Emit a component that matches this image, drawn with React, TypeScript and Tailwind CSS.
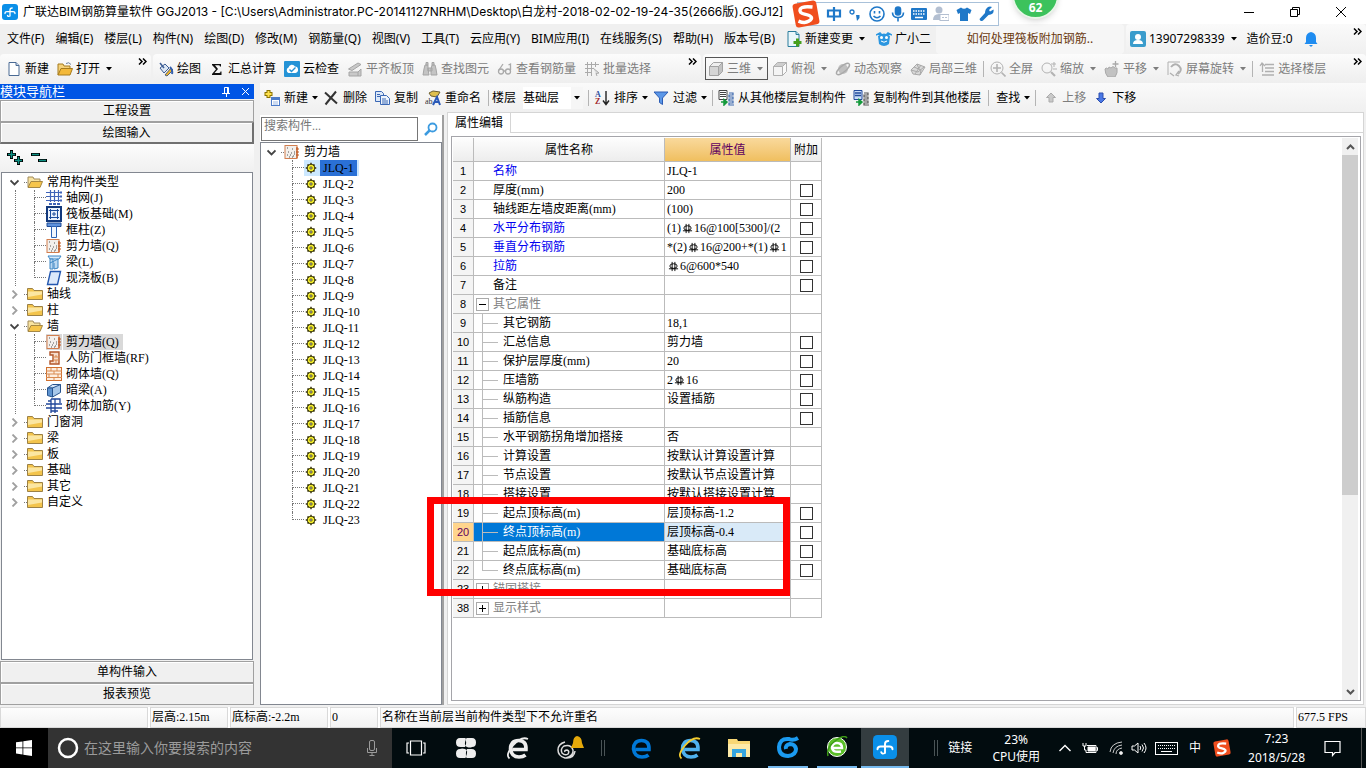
import type { ReactNode } from "react"

const Icons: Record<string, ReactNode> = {
  app: <><rect x="0" y="0" width="16" height="16" rx="3" fill="#0a8fe8" /><path d="M3 9.500q0-1.800 2-1.800h6q2 0 2 1.800M8 12V6q0-2 2.200-2M8 12q-2 1-2.500-.5" fill="none" stroke="#fff" strokeWidth="1.300" strokeLinecap="round" /></>,
  file: <><path d="M3 1.500h7l3 3v10H3z" fill="#fff" stroke="#4a6a94" /><path d="M10 1.500v3h3" fill="#c9d8ea" stroke="#4a6a94" /></>,
  open: <><path d="M1 14V3h5l1 2h6v3" fill="#f5d27a" stroke="#a67b1d" /><path d="M1 14l3-6.500h11.500L13 14z" fill="#f3b93a" stroke="#a67b1d" /><path d="M9 2.500q3-2 5 1" fill="none" stroke="#6a7f9c" /></>,
  folderOpen: <><path d="M1 13V3h5l1 2h6v2" fill="#f8e3a0" stroke="#a08a5a" /><path d="M1 13.500l3-6h11.500l-2.500 6z" fill="#f6c54b" stroke="#a58845" /></>,
  folder: <><path d="M.5 13.500v-11h5l1.500 2h8.500v9z" fill="#f3c44c" stroke="#9c8145" /><path d="M1 5.500h14v3L1 11z" fill="#fbe6a2" /></>,
  paint: <><path d="M2 7l5-4 4 4-5 5z" fill="#dde7f3" stroke="#3c5c94" /><path d="M2 2l4 5" stroke="#3c5c94" strokeWidth="1.500" /><path d="M7 14l6-7 2 2-6 6z" fill="#f0b429" stroke="#52627a" /><path d="M12 6q3 3 2 7" fill="none" stroke="#345fae" strokeWidth="2" /></>,
  sigma: <path d="M3 3h9v2.500h-1q0-1.200-1.500-1.200H6L9 8l-3.500 4H10q1.500 0 1.500-1.500h1V14H3v-1l4-4.800L3 4z" fill="#111" />,
  cloud: <><rect width="16" height="16" rx="1" fill="#2593d6" /><path d="M4.500 12a3 3 0 0 1 0-5.500 3.500 3.500 0 0 1 6.500-1 3.300 3.300 0 0 1 .5 6.500z" fill="#fff" /><path d="M5.500 8.500l2 2 4-4" fill="none" stroke="#2593d6" strokeWidth="1.400" /></>,
  slab: <g fill="#c9c9c9" stroke="#a5a5a5"><path d="M1.500 8L11 2l3 1.500L5 9.500z" /><path d="M2 11h9v4H2zM11 11l3-3v7h-3" /></g>,
  bino: <g fill="#c4c4c4" stroke="#a5a5a5"><path d="M3 4h3v4l1 6H1l1-6zM10 4h3l1 4 1 6H9V8zM6 7h4v3H6z" /><path d="M4 1.500h2V4H4zM10 1.500h2V4h-2z" /></g>,
  glasses: <g fill="none" stroke="#a9a9a9" strokeWidth="1.300"><circle cx="4" cy="10.500" r="2.500" /><circle cx="11" cy="10.500" r="2.500" /><path d="M6.500 10h2M2 9l4-6M13.500 9V3l-2 1" /></g>,
  batch: <g fill="none" stroke="#aaa"><path d="M1 3.500h14M1 7.500h9M1 11.500h7M3.500 1v14M7.500 1v14M11.500 1v5" /><path d="M9 7l6 5-3 .5 1 2.500" fill="#ddd" /></g>,
  cube: <g stroke="#a3a3a3"><path d="M1.500 5.500h9v9h-9z" fill="#d5d5d5" /><path d="M1.500 5.500l4-4h9l-4 4z" fill="#efefef" /><path d="M10.500 5.500l4-4v9l-4 4z" fill="#c3c3c3" /></g>,
  cubeTop: <g stroke="#b0b0b0"><path d="M1.500 5.500h9v9h-9z" fill="#f4f4f4" /><path d="M1.500 5.500l4-4h9l-4 4z" fill="#cecece" /><path d="M10.500 5.500l4-4v9l-4 4z" fill="#fafafa" /></g>,
  orbit: <g><circle cx="8" cy="8" r="5" fill="#c0c0c0" /><ellipse cx="8" cy="8" rx="8" ry="3" transform="rotate(-40 8 8)" fill="none" stroke="#a9a9a9" strokeWidth="1.400" /></g>,
  local3d: <g fill="#dadada" stroke="#a9a9a9"><path d="M1 9l6-6 8 3-5 8-7-1z" /><path d="M4 6l7 3-1 5M7 3l2 5M11 4l-6 9M1 9l7 2 6-5" fill="none" /></g>,
  full: <g fill="none" stroke="#b3b3b3"><circle cx="7" cy="7" r="6" /><path d="M7 3v8M3 7h8M11.500 11.500l4 4" strokeWidth="1.600" /></g>,
  zoom: <g fill="none" stroke="#b3b3b3"><circle cx="6" cy="7" r="5" /><path d="M10 11l4 4" strokeWidth="2.200" /><path d="M10 3h5M13 1v5M12 8h4" /></g>,
  pan: <g><path d="M1 8q1-2 3 0l1-2 2 1 2-1.500 2 1.500 2 0q1 5-2 9H4q-3-3-3-8z" fill="#c2c2c2" stroke="#a9a9a9" /><path d="M11.500 0v6M8.500 3h6" stroke="#a9a9a9" strokeWidth="1.300" /></g>,
  rotate: <g fill="none" stroke="#b0b0b0"><path d="M1 14V1h12" /><path d="M4 6q4-5 8-1t-1 8" strokeWidth="2" /><path d="M12 15l-3-1 3-4M3 12l4 3" strokeWidth="1.300" /></g>,
  floors: <g fill="none" stroke="#b0b0b0" strokeWidth="1.300"><path d="M6 3.500h9M6 7h9M6 10.500h9M3 14h12M1 5l2-3 3 3M3.500 2v9" /></g>,
  add: <><path d="M4.500 0v8M.5 4h8" stroke="#8b7300" strokeWidth="4" /><path d="M4.500 1v6M1.500 4h6" stroke="#ffe14d" strokeWidth="2" /><rect x="7.500" y="7.500" width="8" height="8" fill="#fff" stroke="#4d7cc9" /><path d="M7.500 9h8" stroke="#4d7cc9" strokeWidth="2" /><path d="M9 12h5M9 14h5" stroke="#9cb8e4" /></>,
  del: <path d="M2 2.500l12 11M13 1.500L2.500 14.500" stroke="#333" strokeWidth="2" fill="none" />,
  copy: <g stroke="#3b68b5"><path d="M1.500 1.500h6l2 2v8h-8z" fill="#dce8f8" /><path d="M6.500 5.500h6l3 3v6h-9z" fill="#eef4fc" /><path d="M3 4.500h3M3 6.500h3M8 9h4M8 11h6M8 13h6" /></g>,
  rename: <><path d="M4 3l4-2 7 1-3 5-6-1z" fill="#dfc04e" stroke="#6c6033" /><text x="0" y="14" fontSize="8" fill="#333">ab</text><path d="M8 15l4-8 3 8M9.500 12h4.500" fill="none" stroke="#2a59b8" strokeWidth="2" /></>,
  sort: <><text x="1" y="7" fontSize="8" fontWeight="700" fill="#2d4d9f">A</text><text x="1" y="14" fontSize="8" fontWeight="700" fill="#a1292d">Z</text><path d="M12 1v12M9 10.500l3 4 3-4" fill="none" stroke="#222" strokeWidth="1.400" /></>,
  filter: <path d="M1 2h14l-5.500 6v6.500l-3-2V8z" fill="#5b97e8" stroke="#2c5cb4" />,
  copyFrom: <><path d="M1 .5h8v9H1z" fill="#fff" stroke="#444" /><path d="M2 2.500h6M2 4.500h6M2 6.500h6" stroke="#444" /><path d="M3 12h5M6 9.500l3 2.500-3 3z" stroke="#159a3c" fill="#159a3c" strokeWidth="1.500" /><path d="M11 3h4v2h-4v2h4v2h-4v2h4v2h-4v2h5" fill="none" stroke="#3c68ad" strokeWidth="1.200" /></>,
  copyTo: <><path d="M1 .5h8v9H1z" fill="#c9dcf7" stroke="#234b9c" /><path d="M2 3h6M2 5.500h6" stroke="#234b9c" strokeWidth="1.500" /><path d="M3 12h5M6 9.500l3 2.500-3 3z" stroke="#159a3c" fill="#159a3c" strokeWidth="1.500" /><path d="M11 3h4v2h-4v2h4v2h-4v2h4v2h-4v2h5" fill="none" stroke="#555" strokeWidth="1.200" /></>,
  up: <path d="M8 3l4.500 4.500H10V12H6V7.500H3.500z" fill="#c9c9c9" stroke="#ababab" />,
  down: <path d="M8 13L3.500 8.500H6V3h4v5.500h2.500z" fill="#4a78e6" stroke="#2c4fae" />,
  change: <><path d="M2 .5h8l3 3v12H2z" fill="#e9f6fb" stroke="#2a7c9c" /><path d="M10 .5v3h3" fill="#b5dfee" stroke="#2a7c9c" /><path d="M11.500 7.500v8M7.500 11.500h8" stroke="#46a01d" strokeWidth="3" /></>,
  owl: <><path d="M2 5q6-5 12 0l-1 8q-5 4-10 0z" fill="#2b96e0" /><path d="M0 4l4-2 2 2M16 4l-4-2-2 2" fill="#2b96e0" stroke="#2b96e0" strokeWidth="1.500" /><circle cx="5.500" cy="6.500" r="1.500" fill="#fff" /><circle cx="10.500" cy="6.500" r="1.500" fill="#fff" /><path d="M5 10q3 2.500 6 0" stroke="#fff" fill="none" /></>,
  user: <><rect width="16" height="16" rx="2" fill="#3a9ccc" /><circle cx="8" cy="6" r="3" fill="#fff" /><path d="M3 13q0-4 5-4t5 4z" fill="#fff" /></>,
  bell: <path d="M8 1q5 1 5 6v4l1.500 2h-13L3 11V7q0-5 5-6zM6 14h4l-2 2z" fill="#1f8cf0" />,
  axis: <g fill="none" stroke="#3f63b8" strokeWidth="1.200"><path d="M4.500 0v12M8.500 0v12M12.500 0v12M0 2.500h14M0 6.500h14M0 10.500h14" /><path d="M3 14h3M7 14h3M11 14h3M15 1.500v2M15 5.500v2M15 9.500v2" strokeWidth="2" /></g>,
  raft: <><rect x="1" y="1" width="14" height="14" fill="#eaf1fb" stroke="#12387c" strokeWidth="2" /><path d="M3 4.500h10M3 11.500h10M4.500 3v10M11.500 3v10M7 7h2v2H7z" stroke="#1c4d9c" fill="none" /></>,
  column: <><path d="M1 1h14v3.500H1z" fill="#5f92dc" stroke="#1e4a94" /><path d="M5.500 4.500h5v11h-5z" fill="#f1f6fd" stroke="#2c62b4" /></>,
  wall: <><rect x="1" y="1.500" width="12" height="13" fill="#f3efeb" stroke="#d27e4f" /><path d="M3 4h1M4 8h1M8 5h1M10 8h1M7 9h1M3 11h1M5 13h1M9 12h1M10 10h1M6 11h1M8 13h1" stroke="#555" /><path d="M13 3v11M12 5h3M12 8h3M12 11h3" stroke="#c0561d" strokeWidth="1.200" /></>,
  beam: <><path d="M2 2h13l-2 3H4z" fill="#d5e9fa" stroke="#3c86c4" /><path d="M4 5h3v10H4zM4 9l8-4v9l-4 1V9" fill="#bcd9f2" stroke="#3c86c4" /></>,
  plate: <path d="M4.500 1.500h10l-3 13h-10z" fill="#dce9fb" stroke="#2458b0" strokeWidth="1.400" />,
  door: <><path d="M4 2h9v12H4v-3h3V5H4z" fill="#f6dccb" stroke="#b2562a" strokeWidth="1.400" /><path d="M7 7h6M7 10h6M10 5v2M10 10v3" stroke="#d98a50" /></>,
  brick: <><rect x=".5" y="1.500" width="15" height="13" fill="#fdeee0" stroke="#d0702e" /><path d="M0 5h16M0 8h16M0 11.500h16M5 2v3M11 2v3M8 5v3M3 8v3M12 8v3M8 11.500v3" stroke="#d98a50" /></>,
  hidden: <g stroke="#27548f"><path d="M1.500 6l5-3.500h8l-4 3.500z" fill="#d5e5f7" /><path d="M1.500 6h5v9l-5-1.500z" fill="#5e93cf" /><path d="M6.500 6l8-3.500v8l-8 4.500z" fill="#a8c8ea" /></g>,
  rebar: <path d="M0 6h16M0 10h16M5 1h9v4M5 1v14M9 1v14M2 3h3v10h7" fill="none" stroke="#20479a" strokeWidth="1.300" />,
  gear: <><circle cx="8" cy="8" r="4.500" fill="#f4ee2a" stroke="#3a3710" /><path d="M8 2v2.500M8 11.500V14M2 8h2.500M11.500 8H14M4 4l1.500 1.500M10.500 10.500L12 12M12 4l-1.500 1.500M5.500 10.500L4 12" stroke="#3a3710" strokeWidth="1.600" /><circle cx="8" cy="8" r="1.300" fill="#fff" stroke="#3a3710" /></>,
}

function Ico({ name, className = "size-4" }: { name: string; className?: string }) {
  return (
    <svg viewBox="0 0 16 16" className={`shrink-0 ${className}`} aria-hidden="true">
      {Icons[name]}
    </svg>
  )
}

function Caret() {
  return (
    <svg viewBox="0 0 6 4" className="h-1 w-1.5 shrink-0" aria-hidden="true">
      <path d="M0 0h6L3 3.500z" fill="currentColor" />
    </svg>
  )
}

function More() {
  return (
    <button className="ml-auto flex h-full items-start pt-1 pr-1" aria-label="more">
      <svg viewBox="0 0 9 7" className="h-[7px] w-[9px]" fill="none" stroke="#000" strokeWidth="1.500">
        <path d="M1 .5l3 3-3 3M5 .5l3 3-3 3" />
      </svg>
    </button>
  )
}

function Sep({ className = "" }: { className?: string }) {
  return <span className={`h-4 w-px shrink-0 bg-[#b4b4b4] ${className}`} />
}

type ToolProps = { icon?: string; label: string; caret?: boolean; dim?: boolean; wide?: boolean; className?: string }

function Tool({ icon, label, caret, dim, wide, className = "" }: ToolProps) {
  return (
    <button className={`flex shrink-0 items-center whitespace-nowrap ${wide ? "gap-1" : "gap-[3px]"} ${wide && caret ? "-mr-0.5" : ""} ${dim ? "text-[#7d7d7d]" : "text-black"} ${className}`}>
      {icon && <Ico name={icon} />}
      <span>{label}</span>
      {caret && <span className={wide ? "" : "pl-[3px]"}><Caret /></span>}
    </button>
  )
}

const menus = [
  "文件(F)", "编辑(E)", "楼层(L)", "构件(N)", "绘图(D)", "修改(M)", "钢筋量(Q)", "视图(V)",
  "工具(T)", "云应用(Y)", "BIM应用(I)", "在线服务(S)", "帮助(H)", "版本号(B)",
]

function TitleBar() {
  return (
    <header className="flex h-6 shrink-0 items-center bg-white pl-0.5">
      <Ico name="app" />
      <h1 className="ml-[5px] grow text-xs whitespace-nowrap [font-family:Inter,'Noto_Sans_CJK_SC',sans-serif]">
        广联达BIM钢筋算量软件 GGJ2013 - [C:\Users\Administrator.PC-20141127NRHM\Desktop\白龙村-2018-02-02-19-24-35(2666版).GGJ12]
      </h1>
      <div className="flex gap-9 pr-5">
        <button aria-label="minimize"><svg viewBox="0 0 10 10" className="size-2.5"><path d="M0 5.500h10" stroke="#000" /></svg></button>
        <button aria-label="restore"><svg viewBox="0 0 10 10" className="size-2.5" fill="none" stroke="#000"><path d="M.5 2.500h7v7h-7zM2.500 2V.5h7v7H8" /></svg></button>
        <button aria-label="close"><svg viewBox="0 0 10 10" className="size-2.5" stroke="#000"><path d="M0 0l10 10M10 0L0 10" /></svg></button>
      </div>
    </header>
  )
}

function MenuBar() {
  return (
    <div className="flex h-[30px] shrink-0 items-center bg-[#f0f0f0]">
      <nav className="flex items-center gap-[11px] pl-[7px]">
        {menus.map((m) => <button key={m} className="whitespace-nowrap">{m}</button>)}
        <Tool icon="change" label="新建变更" caret />
        <Tool icon="owl" label="广小二" />
      </nav>
      <div className="ml-auto flex h-full w-[188px] items-center justify-center rounded-sm bg-[#f6f6f6]">
        <a href="#help" className="text-[#6b3a10]">如何处理筏板附加钢筋..</a>
      </div>
      <div className="ml-0.5 flex h-full w-[240px] items-center gap-2.5 rounded-sm bg-linear-to-b from-[#fafafa] to-[#f0f0f0] pl-1">
        <Tool icon="user" label="13907298339" caret />
        <span>造价豆:0</span>
        <Ico name="bell" />
        <More />
      </div>
    </div>
  )
}

function MainToolbar() {
  const band = "flex h-full items-center gap-2 rounded-sm bg-linear-to-b from-[#fcfcfc] to-[#eeeeee]"
  return (
    <div className="flex h-[29px] shrink-0 gap-0.5 bg-[#f0f0f0]">
      <div className={`${band} w-[151px] shrink-0 pl-1.5`}>
        <Tool icon="file" label="新建" />
        <Tool icon="open" label="打开" caret />
        <More />
      </div>
      <div className={`${band} w-[548px] shrink-0 pl-[5px]`}>
        <Tool icon="paint" label="绘图" />
        <Tool icon="sigma" label="汇总计算" />
        <Tool icon="cloud" label="云检查" />
        <Tool icon="slab" label="平齐板顶" dim />
        <Tool icon="bino" label="查找图元" dim />
        <Tool icon="glasses" label="查看钢筋量" dim />
        <Tool icon="batch" label="批量选择" dim />
        <More />
      </div>
      <div className={`${band} min-w-0 grow pl-0.5`}>
        <Tool icon="cube" label="三维" caret dim className="-mr-1 h-[23px] border border-[#555] px-0.5 pr-1" />
        <Tool icon="cubeTop" label="俯视" caret dim />
        <Tool icon="orbit" label="动态观察" dim />
        <Tool icon="local3d" label="局部三维" dim />
        <Sep className="-mx-0.5" />
        <Tool icon="full" label="全屏" dim />
        <Tool icon="zoom" label="缩放" caret dim />
        <Tool icon="pan" label="平移" caret dim />
        <Tool icon="rotate" label="屏幕旋转" caret dim />
        <Sep className="-mx-0.5" />
        <Tool icon="floors" label="选择楼层" dim />
        <More />
      </div>
    </div>
  )
}

function ComponentToolbar() {
  return (
    <div className="flex h-[29px] shrink-0 items-center gap-[7px] bg-linear-to-b from-[#fafafa] to-[#f0f0f0] pl-1">
      <Tool icon="add" label="新建" caret wide />
      <Tool icon="del" label="删除" wide />
      <Tool icon="copy" label="复制" wide />
      <Tool icon="rename" label="重命名" wide />
      <Sep />
      <label htmlFor="floor" className="-ml-1 shrink-0">楼层</label>
      <div className="relative flex h-[22px] w-[60px] shrink-0 items-center bg-white">
        <select id="floor" className="w-full appearance-none bg-transparent outline-none">
          <option>基础层</option>
        </select>
        <span className="pointer-events-none absolute right-0 flex h-full w-3 items-center justify-center bg-[#f6f6f6]"><Caret /></span>
      </div>
      <Sep className="-mx-0.5" />
      <Tool icon="sort" label="排序" caret wide />
      <Tool icon="filter" label="过滤" caret wide />
      <Sep className="-mr-0.5" />
      <Tool icon="copyFrom" label="从其他楼层复制构件" wide />
      <Tool icon="copyTo" label="复制构件到其他楼层" wide />
      <Sep />
      <Tool label="查找" caret wide />
      <Sep />
      <Tool icon="up" label="上移" dim />
      <Tool icon="down" label="下移" />
    </div>
  )
}

type Node = { label: string; icon: string; active?: boolean }
const tree: { label: string; children?: Node[] }[] = [
  {
    label: "常用构件类型",
    children: [
      { label: "轴网(J)", icon: "axis" },
      { label: "筏板基础(M)", icon: "raft" },
      { label: "框柱(Z)", icon: "column" },
      { label: "剪力墙(Q)", icon: "wall" },
      { label: "梁(L)", icon: "beam" },
      { label: "现浇板(B)", icon: "plate" },
    ],
  },
  { label: "轴线" },
  { label: "柱" },
  {
    label: "墙",
    children: [
      { label: "剪力墙(Q)", icon: "wall", active: true },
      { label: "人防门框墙(RF)", icon: "door" },
      { label: "砌体墙(Q)", icon: "brick" },
      { label: "暗梁(A)", icon: "hidden" },
      { label: "砌体加筋(Y)", icon: "rebar" },
    ],
  },
  { label: "门窗洞" }, { label: "梁" }, { label: "板" }, { label: "基础" }, { label: "其它" }, { label: "自定义" },
]

function Chevron({ open }: { open: boolean }) {
  return (
    <button className="flex w-5 justify-center" aria-label={open ? "collapse" : "expand"}>
      <svg viewBox="0 0 9 9" className="size-[9px]" fill="none" strokeWidth="1.800" stroke={open ? "#444" : "#a0a0a0"}>
        <path d={open ? "M.5 2.500l4 4 4-4" : "M2.500 .5l4 4-4 4"} />
      </svg>
    </button>
  )
}

function Branch({ last }: { last: boolean }) {
  return (
    <span className="h-4 w-3 shrink-0">
      <span className="block h-2 w-full border-b border-l border-dotted border-[#777]" />
      {!last && <span className="block h-2 w-full border-l border-dotted border-[#777]" />}
    </span>
  )
}

const navButton = "h-[22px] w-full shrink-0 border border-[#a0a0a0] bg-[#f0f0f0] text-center leading-5 shadow-[inset_1px_1px_0_#fff]"

function Navigator() {
  return (
    <aside className="flex w-[254px] shrink-0 flex-col pt-px pb-0.5">
      <div className="flex h-[15px] shrink-0 items-center bg-[#0055e5] text-white">
        <h2 className="grow text-[13px] leading-[15px]">模块导航栏</h2>
        <button aria-label="pin" className="mr-2.5"><svg viewBox="0 0 9 10" className="h-2.5 w-[9px]" fill="none" stroke="#fff"><path d="M2.500 6V.5h4V6M5.500 1v5M0 6.500h8M4.500 6.500V10" /></svg></button>
        <button aria-label="close panel" className="mr-1"><svg viewBox="0 0 9 9" className="size-[9px]" stroke="#fff"><path d="M1 1l7 7M8 1L1 8" /></svg></button>
      </div>
      <button className={`${navButton} mt-px`}>工程设置</button>
      <button className={`${navButton} border-r-2 border-b-2 border-r-[#707070] border-b-[#707070]`}>绘图输入</button>
      <div className="flex h-7 shrink-0 items-center gap-2 bg-linear-to-b from-[#fcfcfc] to-[#f0f0f0] pl-[7px]">
        <button aria-label="expand all">
          <svg viewBox="0 0 16 16" className="size-4"><path d="M4.500 0v9M0 4.500h9M11.500 6v9M7 10.500h9" stroke="#000" strokeWidth="3" /><path d="M4.500 1v7M1 4.500h7M11.500 7v7M8 10.500h7" stroke="#0d8f82" strokeWidth="1.500" /></svg>
        </button>
        <button aria-label="collapse all">
          <svg viewBox="0 0 16 16" className="size-4"><path d="M0 4.500h9M7 10.500h9" stroke="#000" strokeWidth="3" /><path d="M1 4.500h7M8 10.500h7" stroke="#0d8f82" strokeWidth="1.500" /></svg>
        </button>
      </div>
      <ul className="mx-px min-h-0 grow overflow-hidden border border-[#828790] bg-white pt-px pl-0.5 leading-4">
        {tree.map((g) => (
          <li key={g.label}>
            <div className="flex h-4 items-center">
              <Chevron open={!!g.children} />
              <span className="w-[3px] border-b border-dotted border-[#777]" />
              <Ico name={g.children ? "folderOpen" : "folder"} />
              <span className="pl-1">{g.label}</span>
            </div>
            {g.children && (
              <ul className="ml-[11px] border-l border-dotted border-[#777] pl-[18px]">
                {g.children.map((c, i) => (
                  <li key={c.label} className="flex h-4 items-center">
                    <Branch last={i === g.children!.length - 1} />
                    <Ico name={c.icon} className={c.active ? "size-4 bg-[#d9d9d9]" : "size-4"} />
                    <span className={c.active ? "ml-px bg-[#d9d9d9] pr-1 pl-[3px]" : "pl-1"}>{c.label}</span>
                  </li>
                ))}
              </ul>
            )}
          </li>
        ))}
      </ul>
      <button className={`${navButton} mt-px`}>单构件输入</button>
      <button className={navButton}>报表预览</button>
    </aside>
  )
}

const walls = Array.from({ length: 23 }, (_, i) => `JLQ-${i + 1}`)

function ComponentList() {
  return (
    <section className="mt-[3px] mb-0.5 flex w-[184px] shrink-0 flex-col border-r-2 border-[#a0a0a0] bg-white">
      <div className="flex h-[27px] shrink-0 items-center pl-px">
        <input aria-label="搜索构件" placeholder="搜索构件..." className="h-6 w-[157px] border border-[#767676] px-0.5 pb-1 text-xs outline-none placeholder:text-[#777]" />
        <button aria-label="search" className="ml-1.5">
          <svg viewBox="0 0 14 14" className="size-3.5" fill="none" stroke="#3c9be0"><circle cx="8.500" cy="5.500" r="4" strokeWidth="1.800" /><path d="M5.500 8.500L1 13" strokeWidth="2.500" /></svg>
        </button>
      </div>
      <ul className="min-h-0 grow overflow-hidden border border-[#828790] pt-px leading-4">
        <li>
          <div className="flex h-4 items-center">
            <Chevron open />
            <span className="w-[3px] border-b border-dotted border-[#777]" />
            <Ico name="wall" />
            <span className="pl-1">剪力墙</span>
          </div>
          <ul className="ml-[31px]">
            {walls.map((w, i) => (
              <li key={w} className="flex h-4 items-center">
                <Branch last={i === walls.length - 1} />
                <span className={i === 0 ? "flex bg-[#cce8ff] pr-0.5" : "flex pr-0.5"}>
                  <Ico name="gear" className="mr-0.5 h-4 w-3.5" />
                  <span className={i === 0 ? "bg-[#2a70d6] px-[3px]" : "px-[3px]"}>{w}</span>
                </span>
              </li>
            ))}
          </ul>
        </li>
      </ul>
    </section>
  )
}

type Row = { n: number; name: string; value?: string; check?: boolean; kind?: "group" | "closed" | "child" | "last"; blue?: boolean; selected?: boolean }

// "#" in a value stands for the steel grade mark
const rows: Row[] = [
  { n: 1, name: "名称", value: "JLQ-1", blue: true },
  { n: 2, name: "厚度(mm)", value: "200", check: true },
  { n: 3, name: "轴线距左墙皮距离(mm)", value: "(100)", check: true },
  { n: 4, name: "水平分布钢筋", value: "(1)#16@100[5300]/(2", check: true, blue: true },
  { n: 5, name: "垂直分布钢筋", value: "*(2)#16@200+*(1)#1", check: true, blue: true },
  { n: 6, name: "拉筋", value: "#6@600*540", check: true, blue: true },
  { n: 7, name: "备注", check: true },
  { n: 8, name: "其它属性", kind: "group" },
  { n: 9, name: "其它钢筋", value: "18,1", kind: "child" },
  { n: 10, name: "汇总信息", value: "剪力墙", check: true, kind: "child" },
  { n: 11, name: "保护层厚度(mm)", value: "20", check: true, kind: "child" },
  { n: 12, name: "压墙筋", value: "2#16", check: true, kind: "child" },
  { n: 13, name: "纵筋构造", value: "设置插筋", check: true, kind: "child" },
  { n: 14, name: "插筋信息", check: true, kind: "child" },
  { n: 15, name: "水平钢筋拐角增加搭接", value: "否", kind: "child" },
  { n: 16, name: "计算设置", value: "按默认计算设置计算", kind: "child" },
  { n: 17, name: "节点设置", value: "按默认节点设置计算", kind: "child" },
  { n: 18, name: "搭接设置", value: "按默认搭接设置计算", kind: "child" },
  { n: 19, name: "起点顶标高(m)", value: "层顶标高-1.2", check: true, kind: "child" },
  { n: 20, name: "终点顶标高(m)", value: "层顶标高-0.4", check: true, kind: "child", selected: true },
  { n: 21, name: "起点底标高(m)", value: "基础底标高", check: true, kind: "child" },
  { n: 22, name: "终点底标高(m)", value: "基础底标高", check: true, kind: "last" },
  { n: 23, name: "锚固搭接", kind: "closed" },
  { n: 38, name: "显示样式", kind: "closed" },
]

function Grade() {
  return (
    <svg viewBox="0 0 12 12" className="mx-px inline size-[11px] align-[-2px]" fill="none" stroke="currentColor">
      <ellipse cx="6" cy="5.500" rx="4" ry="2.500" />
      <path d="M4.500 1v10M7.500 1v10M1 8.500h10" />
    </svg>
  )
}

function Value({ text }: { text: string }) {
  return <>{text.split("#").map((part, i) => <span key={i}>{i > 0 && <Grade />}{part}</span>)}</>
}

function Guide({ kind }: { kind?: Row["kind"] }) {
  if (kind === "child")
    return <span className="mr-[5px] ml-2 flex h-[19px] w-4 shrink-0 items-center border-l border-[#bbb]"><span className="h-px w-full bg-[#bbb]" /></span>
  if (kind === "last")
    return <span className="mr-[5px] ml-2 h-2.5 w-4 shrink-0 self-start border-b border-l border-[#bbb]" />
  if (kind)
    return (
      <button className="mr-1 ml-0.5 flex size-[13px] shrink-0 items-center justify-center border border-[#aaa] bg-white" aria-label={kind === "group" ? "collapse" : "expand"}>
        <svg viewBox="0 0 7 7" className="size-[7px]" stroke="#000"><path d={kind === "group" ? "M0 3.500h7" : "M0 3.500h7M3.500 0v7"} /></svg>
      </button>
    )
  return <span className="w-[19px] shrink-0" />
}

function PropertyTable() {
  const cell = "h-[19px] border-r border-b border-[#bbb] p-0"
  const head = "h-6 border-r border-b border-[#bbb] bg-linear-to-b from-[#fdfdfd] to-[#ededed] p-0 font-normal"
  return (
    <table className="w-[369px] table-fixed border-separate border-spacing-0 leading-[18px]">
      <colgroup>
        <col className="w-[21px]" /><col className="w-[191px]" /><col className="w-[126px]" /><col className="w-[31px]" />
      </colgroup>
      <thead>
        <tr>
          <th className={head} aria-label="序号" />
          <th className={head}>属性名称</th>
          <th className="h-6 border-r border-b border-[#bbb] bg-linear-to-b from-[#f9d99c] to-[#f0bf5e] p-0 font-normal text-[#600060]">属性值</th>
          <th className={`${head} whitespace-nowrap`}>附加</th>
        </tr>
      </thead>
      <tbody>
        {rows.map((r) => (
          <tr key={r.n}>
            <td className={`${cell} text-center text-[11px] [font-family:'Liberation_Sans',sans-serif] ${r.selected ? "bg-[#ffd58d] text-[#600060]" : "bg-[#f4f4f4]"}`}>{r.n}</td>
            <td className={`${cell} ${r.selected ? "bg-[#0078d7] text-white" : r.blue ? "text-[#0000f0]" : r.kind === "group" || r.kind === "closed" ? "text-[#808080]" : ""}`}>
              <div className="flex h-[18px] items-center whitespace-nowrap"><Guide kind={r.kind} /><span>{r.name}</span></div>
            </td>
            <td className={`${cell} ${r.selected ? "bg-[#d9eaf8]" : ""}`}>
              <div className="h-[18px] overflow-hidden pl-0.5 whitespace-nowrap">{r.value && <Value text={r.value} />}</div>
            </td>
            <td className={cell}>
              <div className="flex h-[18px] items-center justify-center">
                {r.check && <input type="checkbox" aria-label={`附加 ${r.name}`} className="size-[13px] appearance-none border border-[#333] bg-white" />}
              </div>
            </td>
          </tr>
        ))}
      </tbody>
    </table>
  )
}

function PropertyEditor() {
  return (
    <section className="mr-0.5 mb-0.5 ml-[3px] flex min-w-0 grow flex-col border-r border-b border-l border-[#d5d5d5] bg-white">
      <div className="flex h-[21px] shrink-0">
        <button className="w-[63px] border-t border-r border-[#d5d5d5] text-center leading-5">属性编辑</button>
        <div className="grow border-t border-b border-[#d5d5d5]" />
      </div>
      <div className="m-[3px] mr-0.5 flex min-h-0 grow border border-[#a5a5aa] pt-px pl-px">
        <div className="relative">
          <PropertyTable />
          <div className="pointer-events-none absolute top-[359px] -left-[26px] h-[99px] w-[363px] border-[7px] border-[#ff0000]" />
        </div>
        <div className="mr-0.5 ml-auto flex w-4 flex-col items-center bg-[#f0f0f0]">
          <button aria-label="scroll up" className="flex h-[17px] items-center"><svg viewBox="0 0 9 6" className="h-1.5 w-[9px]" fill="none" stroke="#555" strokeWidth="2"><path d="M1 5l3.500-3.500L8 5" /></svg></button>
          <div className="h-[340px] w-full bg-[#cdcdcd]" />
          <button aria-label="scroll down" className="mt-auto flex h-[17px] items-center"><svg viewBox="0 0 9 6" className="h-1.5 w-[9px]" fill="none" stroke="#555" strokeWidth="2"><path d="M1 1l3.500 3.500L8 1" /></svg></button>
        </div>
      </div>
    </section>
  )
}

function StatusBar() {
  const cell = "h-[21px] shrink-0 border border-[#d9d9d9] bg-linear-to-b from-[#fdfdfd] to-[#f2f2f2] pl-px leading-[19px] whitespace-nowrap"
  return (
    <footer className="flex h-[21px] shrink-0 gap-0.5 bg-white">
      <div className={`${cell} w-[148px]`} />
      <div className={`${cell} w-[78px]`}>层高:2.15m</div>
      <div className={`${cell} w-[98px]`}>底标高:-2.2m</div>
      <div className={`${cell} w-12`}>0</div>
      <div className={`${cell} grow`}>名称在当前层当前构件类型下不允许重名</div>
      <div className={`${cell} w-[70px]`}>677.5 FPS</div>
    </footer>
  )
}

function SogouMark({ className }: { className: string }) {
  return (
    <svg viewBox="0 0 28 28" className={className} aria-hidden="true">
      <rect x="2" y="2" width="24" height="24" rx="3" fill="#f04e1e" transform="rotate(-10 14 14)" />
      <path d="M21 7.500q-11-2-12.500 1.500t4 5 6.500 3.500-3 4-10-1" fill="none" stroke="#fff" strokeWidth="3.500" transform="rotate(-4 14 14)" />
    </svg>
  )
}

function ImeBar() {
  return (
    <div className="absolute top-0 left-[792px] flex h-7 items-center">
      <div className="ml-[5px] flex h-6 w-[202px] items-center justify-between border border-[#a9c1d9] bg-white pr-1 pl-7 text-[#1f78c8]">
        <button aria-label="中文"><svg viewBox="0 0 16 16" className="size-4" fill="none" stroke="currentColor" strokeWidth="2.200"><path d="M2 4.500h12v6H2zM8 1v14" /></svg></button>
        <button aria-label="标点"><svg viewBox="0 0 14 16" className="h-4 w-3.5"><circle cx="4" cy="6" r="2" fill="none" stroke="currentColor" strokeWidth="1.300" /><path d="M8 9h3.500v3L9 15z" fill="currentColor" /></svg></button>
        <button aria-label="表情"><svg viewBox="0 0 16 16" className="size-4" fill="none" stroke="currentColor" strokeWidth="1.600"><circle cx="8" cy="8" r="7" /><path d="M5.500 5v2.500M10.500 5v2.500M4.500 10q3.500 3.500 7 0" /></svg></button>
        <button aria-label="语音"><svg viewBox="0 0 14 16" className="h-4 w-3.5" fill="none" stroke="currentColor" strokeWidth="1.600"><rect x="4.500" y="1" width="5" height="8" rx="2.500" fill="currentColor" /><path d="M1.500 6.500q0 5 5.500 5t5.500-5M7 12v3.500" /></svg></button>
        <button aria-label="键盘"><svg viewBox="0 0 16 14" className="h-3.5 w-4"><rect y="1" width="16" height="12" rx="1" fill="currentColor" /><path d="M2 4h12M2 7h12" stroke="#fff" strokeWidth="1.500" strokeDasharray="1.500 1" /><path d="M4 10.500h8" stroke="#fff" strokeWidth="1.500" /></svg></button>
        <button aria-label="账号"><svg viewBox="0 0 16 16" className="size-4" fill="#b3bfd1"><circle cx="6" cy="4" r="3.500" /><path d="M0 14q0-6 6-6 2 0 3 1v5z" /><rect x="7" y="8.500" width="9" height="6" fill="#fff" stroke="#b3bfd1" /><path d="M9 11.500h2M12 11.500h2" stroke="#b3bfd1" /></svg></button>
        <button aria-label="皮肤"><svg viewBox="0 0 16 16" className="size-4" fill="currentColor"><path d="M5 1.500q3 2.500 6 0l4.500 2.500-1.500 4-2-1v8H4V7L2 8 .5 4z" /></svg></button>
        <button aria-label="工具箱"><svg viewBox="0 0 16 16" className="size-4" fill="currentColor"><path d="M10 1q2-1 4 0l-3 3 1 1.500 3.500-2q1 5-5 5.500L5 14.500q-3 1.500-3.500-1.500L7 7q0-4 3-6z" /></svg></button>
      </div>
      <SogouMark className="absolute top-0 left-0 size-7" />
    </div>
  )
}

const dark = "flex h-full shrink-0 items-center justify-center"

function TaskBar() {
  return (
    <footer className="flex h-10 shrink-0 items-center bg-[#020c0f] text-xs text-white">
      <button aria-label="开始" className={`${dark} w-12 bg-black`}>
        <svg viewBox="0 0 16 16" className="size-4" fill="#fff"><path d="M0 2.300L6.500 1.400v6.100H0zM7.300 1.300L16 0v7.500H7.300zM0 8.300h6.500v6.200L0 13.600zM7.300 8.300H16V16l-8.700-1.300z" /></svg>
      </button>
      <label className="flex h-full w-[344px] shrink-0 items-center bg-[#333] pl-[9px]">
        <svg viewBox="0 0 22 22" className="size-[22px]"><circle cx="11" cy="11" r="9" fill="none" stroke="#fff" strokeWidth="2.500" /></svg>
        <input aria-label="搜索" placeholder="在这里输入你要搜索的内容" className="ml-[5px] min-w-0 grow bg-transparent text-sm outline-none placeholder:text-[#9b9b9b]" />
        <svg viewBox="0 0 12 16" className="mr-3.5 h-4 w-3" fill="none" stroke="#9b9b9b"><rect x="3.500" y=".5" width="5" height="10" rx="1.500" /><path d="M1.500 8v4.500h9V8M6 12.500V15.500M3.500 15.500h5" /></svg>
      </label>
      <button aria-label="任务视图" className={`${dark} w-12`}>
        <svg viewBox="0 0 20 16" className="h-4 w-5" fill="none" stroke="#fff" strokeWidth="1.200"><path d="M4.500 1h11v14h-11zM3 3H1v10h2M17 3h2v10h-2" /></svg>
      </button>
      <button aria-label="四叶" className={`${dark} w-[52px]`}>
        <svg viewBox="0 0 22 22" className="size-[22px]" fill="#eee"><path d="M10 10Q12 6 10.500 1H5Q1 1 1 5.500T5.500 10zM12 10q-4-1-.5-9H17q4 0 4 4.500T17 10q-2 1-5 0zM12 12q-2 4-.5 9H17q4 0 4-4.500T16.500 12zM10 12q4 1 .5 9H5q-4 0-4-4.500T5 12q2-1 5 0z" /></svg>
      </button>
      <button aria-label="浏览器" className={`${dark} w-[52px]`}><Browser color="#eee" ring="#eee" /></button>
      <button aria-label="提醒" className={`${dark} w-[52px]`}>
        <svg viewBox="0 0 28 26" className="h-[26px] w-7" fill="none" stroke="#ddd" strokeWidth="1.500">
          <path d="M9 7q-7 2-7 8t7 8q9 1 10-7M10 23q8-2 7-8-2-6-9-4-4 3-2 7 3 3 6 1 2-3-1-4-3 0-2 2" />
          <path d="M21 1q5 1 5 7l2 5H15l2-5q0-6 4-7z" fill="#e5a90a" stroke="none" />
        </svg>
      </button>
      <span className="ml-[5px] h-4 w-1 border-x border-[#4a5456]" />
      <button aria-label="Edge" className={`${dark} ml-[11px] w-[49px]`}><Browser color="#0078d7" /></button>
      <button aria-label="Internet Explorer" className={`${dark} w-[49px]`}><Browser color="#4fb2ee" ring="#f5cc2e" /></button>
      <button aria-label="文件资源管理器" className={`${dark} w-[49px]`}>
        <svg viewBox="0 0 22 18" className="h-[18px] w-[22px]"><path d="M0 0h9l1 2h12v16H0z" fill="#f8d775" /><path d="M0 5h22v13H0z" fill="#fdeaa8" /><path d="M4 18v-8h14v8h-4v-4H8v4z" fill="#36a5df" /></svg>
      </button>
      <button aria-label="广联达" className={`${dark} w-[49px]`}>
        <span className="flex h-full w-10 items-center justify-center border-b-2 border-[#76b9ed]">
          <svg viewBox="0 0 24 24" className="size-6" fill="none" stroke="#1b9bf0" strokeWidth="4"><path d="M22 3q-5 3-9 1-9-1-10 8 0 9 9 9 8-1 8-7-1-5-6-5-5 1-4 5" /></svg>
        </span>
      </button>
      <button aria-label="360浏览器" className={`${dark} w-[49px]`}>
        <span className="flex h-full w-10 items-center justify-center border-b-2 border-[#76b9ed]">
          <svg viewBox="0 0 22 22" className="size-[22px]"><circle cx="11" cy="11" r="9.500" fill="#5cbf2a" stroke="#fff" /><path d="M6 12h10q0-5-5-5t-5 5q1 5 9 3.500" fill="none" stroke="#fff" strokeWidth="2.500" /><path d="M2 20Q0 12 9 5t12-3" fill="none" stroke="#3d9b17" strokeWidth="1.500" /></svg>
        </span>
      </button>
      <button aria-label="GGJ2013" className={`${dark} w-12 border-b-2 border-[#76b9ed] bg-[#343d40]`}><Ico name="app" className="size-6" /></button>
      <div className="ml-auto flex h-full items-center">
        <span className="mr-2.5 h-4 w-1 border-x border-[#4a5456]" />
        <span className="mr-5">链接</span>
        <span className="mr-[18px] text-center leading-[17px]">23%<br />CPU使用</span>
        <button aria-label="显示隐藏的图标" className="mr-2.5"><svg viewBox="0 0 14 8" className="h-2 w-3.5" fill="none" stroke="#fff" strokeWidth="1.400"><path d="M1.500 7L7 1.500 12.500 7" /></svg></button>
        <svg viewBox="0 0 16 12" className="mr-[11px] h-3 w-4" fill="none" stroke="#fff"><path d="M5 3.500h9v7H4V8M14.500 5.500h1v3h-1M1 1v3h3V1M2.500 4v4H4" /><path d="M6 5h7v4H6z" fill="#fff" /></svg>
        <svg viewBox="0 0 14 14" className="mr-2 size-3.5" fill="none" stroke="#ccc"><path d="M1 11Q2 2 13 1M4 12q1-7 9-8M7 13q0-5 6-6" /><circle cx="12" cy="12" r="1.500" fill="#fff" /></svg>
        <svg viewBox="0 0 16 14" className="mr-2 h-3.5 w-4" fill="none" stroke="#fff"><path d="M1 5h2.500L7 2v10L3.500 9H1zM9 5q1.500 2 0 4M11 3.500q3 3.500 0 7M13 2q4 5 0 10" /></svg>
        <svg viewBox="0 0 23 13" className="mr-[11px] h-[13px] w-[23px]" fill="none" stroke="#fff"><rect x=".5" y=".5" width="22" height="12" /><path d="M3 3.500h17M3 6.500h17" strokeDasharray="1 1" /><path d="M6 9.500h11" /></svg>
        <span className="mr-3">中</span>
        <SogouMark className="mr-[17px] size-[18px]" />
        <time className="mr-[19px] text-center leading-[19px]">7:23<br />2018/5/28</time>
        <button aria-label="通知"><svg viewBox="0 0 17 17" className="mr-5 size-[17px]" fill="none" stroke="#fff" strokeWidth="1.200"><path d="M1 1.500h15v11h-5l-2.500 3V12.500H1z" /></svg></button>
        <span className="mr-1 h-full w-px bg-[#555]" />
      </div>
    </footer>
  )
}

function Browser({ color, ring }: { color: string; ring?: string }) {
  return (
    <svg viewBox="0 0 24 24" className="size-6" fill="none">
      <path d="M6.500 13.500h13.500Q20.500 4.500 12.500 4.500T4.500 13q1 8 8.500 8 4 0 6.500-2" stroke={color} strokeWidth="3.600" />
      {ring && <path d="M3.500 22.500Q-1 19 7 9.500T22 3" stroke={ring} strokeWidth="1.800" />}
    </svg>
  )
}

export default function App() {
  return (
    <div className="relative flex h-screen flex-col overflow-hidden bg-[#f0f0f0] text-xs text-black [font-family:'Noto_Sans','Noto_Sans_CJK_SC',sans-serif]">
      <TitleBar />
      <MenuBar />
      <MainToolbar />
      <main className="flex min-h-0 grow [font-family:'Liberation_Serif','Noto_Sans_CJK_SC',serif]">
        <Navigator />
        <div className="ml-1.5 flex min-w-0 grow flex-col">
          <ComponentToolbar />
          <div className="flex min-h-0 grow">
            <ComponentList />
            <PropertyEditor />
          </div>
        </div>
      </main>
      <div className="shrink-0 [font-family:'Liberation_Serif','Noto_Sans_CJK_SC',serif]"><StatusBar /></div>
      <TaskBar />
      <ImeBar />
      <div className="absolute -top-7 left-[1012px] flex size-[47px] items-end justify-center rounded-full border-2 border-[#e8f5e8] bg-[#3cc25c] pb-0.5 text-xs leading-[14px] font-bold text-white shadow-md">62</div>
    </div>
  )
}
